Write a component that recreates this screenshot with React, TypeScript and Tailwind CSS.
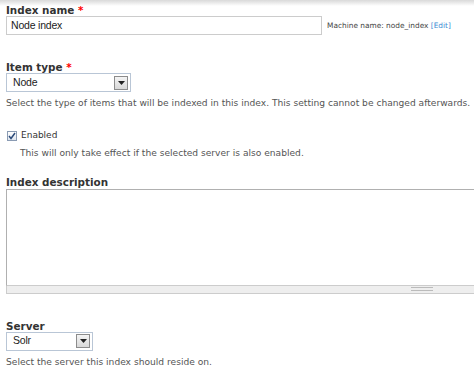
import React from "react";

const inputFont = { fontFamily: "'Liberation Sans', Arial, sans-serif", letterSpacing: "-0.2px" };

function Arrow() {
  return (
    <span className="flex h-[14px] w-[14px] items-center justify-center border border-[#8c8c8c] bg-gradient-to-b from-[#f4f4f4] to-[#d8d8d8]">
      <svg width="7" height="4" viewBox="0 0 7 4">
        <path d="M0 0h7L3.5 4z" fill="#222" />
      </svg>
    </span>
  );
}

function Select({ value, width }: { value: string; width: string }) {
  return (
    <div className={`flex h-[19px] items-center justify-between border border-[#b9c6d6] bg-white pl-[6px] pr-[2px] ${width}`}>
      <span className="text-[10.5px] text-[#222]" style={inputFont}>{value}</span>
      <Arrow />
    </div>
  );
}

export default function App() {
  return (
    <div className="relative h-[376px] w-[474px] overflow-hidden bg-white text-[#494949]" style={{ fontFamily: "'DejaVu Sans', Verdana, sans-serif" }}>
      <div className="absolute left-0 right-0 top-0 h-[6px] bg-gradient-to-b from-[#d9d9d9] to-white" />
      <div className="flex flex-col pl-[6px] pt-[4px]">
        <div className="text-[10.4px] font-bold leading-[12px] text-[#333]">
          Index name <span className="text-[#f00]">*</span>
        </div>
        <div className="flex items-center gap-[5px]">
          <div className="flex h-[19px] w-[316px] items-center border border-[#ccc] bg-white pl-[4px] text-[10.5px] text-[#222]" style={inputFont}>
            Node index
          </div>
          <div className="text-[7.4px] text-[#444]">
            Machine name: node_index <span className="text-[#3b8bd3]">[Edit]</span>
          </div>
        </div>

        <div className="mt-[26px] text-[10.4px] font-bold leading-[12px] text-[#333]">
          Item type <span className="text-[#f00]">*</span>
        </div>
        <div>
          <Select value="Node" width="w-[125px]" />
        </div>
        <div className="mt-[6px] text-[9.12px] leading-[11px] text-[#555]">
          Select the type of items that will be indexed in this index. This setting cannot be changed afterwards.
        </div>

        <div className="mt-[20px] flex items-center gap-[4px] pl-[1px]">
          <span className="flex h-[10px] w-[10px] items-center justify-center border border-[#8a9bb3] bg-gradient-to-b from-white to-[#dde4ee]">
            <svg width="8" height="8" viewBox="0 0 8 8">
              <path d="M1 4l2 2.5L7 1" stroke="#2b4a7a" strokeWidth="1.5" fill="none" />
            </svg>
          </span>
          <span className="text-[9px] text-[#333]">Enabled</span>
        </div>
        <div className="mt-[5px] pl-[14px] text-[9.12px] leading-[11px] text-[#555]">
          This will only take effect if the selected server is also enabled.
        </div>

        <div className="mt-[17px] text-[10.4px] font-bold leading-[13px] text-[#333]">Index description</div>
        <div className="-mr-[10px] flex flex-col">
          <div className="h-[97px] border border-[#b0b0b0] border-b-[#ccc] bg-white" />
          <div className="flex h-[8px] items-center justify-end border-x border-b border-[#ccc] bg-[#eee] pr-[50px]">
            <div className="h-[4px] w-[22px] border-y border-[#bbb]" />
          </div>
        </div>

        <div className="mt-[26px] text-[10.4px] font-bold leading-[12px] text-[#333]">Server</div>
        <div>
          <Select value="Solr" width="w-[87px]" />
        </div>
        <div className="mt-[6px] text-[9.12px] leading-[11px] text-[#555]">
          Select the server this index should reside on.
        </div>
      </div>
    </div>
  );
}
